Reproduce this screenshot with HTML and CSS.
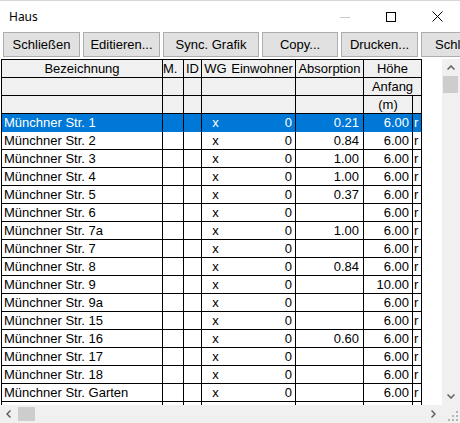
FILE: index.html
```html
<!DOCTYPE html>
<html lang="de">
<head>
<meta charset="utf-8">
<title>Haus</title>
<link rel="stylesheet" href="styles.css">
</head>
<body>
<div class="window">
  <div class="titlebar">
    <span class="title">Haus</span>
    <div class="controls">
      <div class="ctl"><svg width="10" height="10" viewBox="0 0 10 10"><line x1="0" y1="5.5" x2="10" y2="5.5" stroke="#c8c8c8" stroke-width="1"/></svg></div>
      <div class="ctl"><svg width="10" height="10" viewBox="0 0 10 10"><rect x="0.5" y="0.5" width="9" height="9" fill="none" stroke="#000" stroke-width="1"/></svg></div>
      <div class="ctl"><svg width="11" height="11" viewBox="0 0 11 11"><path d="M0.5 0.5 L10.5 10.5 M10.5 0.5 L0.5 10.5" stroke="#000" stroke-width="1"/></svg></div>
    </div>
  </div>
  <div class="toolbar">
    <button class="btn w77">Schließen</button>
    <button class="btn w77">Editieren...</button>
    <button class="btn w96">Sync. Grafik</button>
    <button class="btn w76">Copy...</button>
    <button class="btn w77">Drucken...</button>
    <button class="btn w86">Schließen</button>
  </div>
  <div class="main">
    <div class="grid">
      <div class="table">
        <div class="c h ctr">Bezeichnung</div>
        <div class="c h lft1">M.</div>
        <div class="c h lft2">ID</div>
        <div class="c h wg ctr">WG</div>
        <div class="c h ctr">Einwohner</div>
        <div class="c h ctr">Absorption</div>
        <div class="c h ctr span2">Höhe</div>

        <div class="c h"></div><div class="c h"></div><div class="c h"></div><div class="c h wg"></div><div class="c h"></div><div class="c h"></div>
        <div class="c h ctr span2">Anfang</div>

        <div class="c h"></div><div class="c h"></div><div class="c h"></div><div class="c h wg"></div><div class="c h"></div><div class="c h"></div>
        <div class="c h ctr">(m)</div><div class="c h"></div>

        <div class="c sel nm">Münchner Str. 1</div><div class="c sel"></div><div class="c sel"></div><div class="c sel wg ctr">x</div><div class="c sel num">0</div><div class="c sel num ab">0.21</div><div class="c sel num">6.00</div><div class="c sel r">r</div>

        <div class="c nm">Münchner Str. 2</div><div class="c"></div><div class="c"></div><div class="c wg ctr">x</div><div class="c num">0</div><div class="c num ab">0.84</div><div class="c num">6.00</div><div class="c r">r</div>

        <div class="c nm">Münchner Str. 3</div><div class="c"></div><div class="c"></div><div class="c wg ctr">x</div><div class="c num">0</div><div class="c num ab">1.00</div><div class="c num">6.00</div><div class="c r">r</div>

        <div class="c nm">Münchner Str. 4</div><div class="c"></div><div class="c"></div><div class="c wg ctr">x</div><div class="c num">0</div><div class="c num ab">1.00</div><div class="c num">6.00</div><div class="c r">r</div>

        <div class="c nm">Münchner Str. 5</div><div class="c"></div><div class="c"></div><div class="c wg ctr">x</div><div class="c num">0</div><div class="c num ab">0.37</div><div class="c num">6.00</div><div class="c r">r</div>

        <div class="c nm">Münchner Str. 6</div><div class="c"></div><div class="c"></div><div class="c wg ctr">x</div><div class="c num">0</div><div class="c num ab"></div><div class="c num">6.00</div><div class="c r">r</div>

        <div class="c nm">Münchner Str. 7a</div><div class="c"></div><div class="c"></div><div class="c wg ctr">x</div><div class="c num">0</div><div class="c num ab">1.00</div><div class="c num">6.00</div><div class="c r">r</div>

        <div class="c nm">Münchner Str. 7</div><div class="c"></div><div class="c"></div><div class="c wg ctr">x</div><div class="c num">0</div><div class="c num ab"></div><div class="c num">6.00</div><div class="c r">r</div>

        <div class="c nm">Münchner Str. 8</div><div class="c"></div><div class="c"></div><div class="c wg ctr">x</div><div class="c num">0</div><div class="c num ab">0.84</div><div class="c num">6.00</div><div class="c r">r</div>

        <div class="c nm">Münchner Str. 9</div><div class="c"></div><div class="c"></div><div class="c wg ctr">x</div><div class="c num">0</div><div class="c num ab"></div><div class="c num">10.00</div><div class="c r">r</div>

        <div class="c nm">Münchner Str. 9a</div><div class="c"></div><div class="c"></div><div class="c wg ctr">x</div><div class="c num">0</div><div class="c num ab"></div><div class="c num">6.00</div><div class="c r">r</div>

        <div class="c nm">Münchner Str. 15</div><div class="c"></div><div class="c"></div><div class="c wg ctr">x</div><div class="c num">0</div><div class="c num ab"></div><div class="c num">6.00</div><div class="c r">r</div>

        <div class="c nm">Münchner Str. 16</div><div class="c"></div><div class="c"></div><div class="c wg ctr">x</div><div class="c num">0</div><div class="c num ab">0.60</div><div class="c num">6.00</div><div class="c r">r</div>

        <div class="c nm">Münchner Str. 17</div><div class="c"></div><div class="c"></div><div class="c wg ctr">x</div><div class="c num">0</div><div class="c num ab"></div><div class="c num">6.00</div><div class="c r">r</div>

        <div class="c nm">Münchner Str. 18</div><div class="c"></div><div class="c"></div><div class="c wg ctr">x</div><div class="c num">0</div><div class="c num ab"></div><div class="c num">6.00</div><div class="c r">r</div>

        <div class="c nm">Münchner Str. Garten</div><div class="c"></div><div class="c"></div><div class="c wg ctr">x</div><div class="c num">0</div><div class="c num ab"></div><div class="c num">6.00</div><div class="c r">r</div>

        <div class="c nm">Sonnenbichl Garten</div><div class="c"></div><div class="c"></div><div class="c wg ctr">x</div><div class="c num">0</div><div class="c num ab"></div><div class="c num">6.00</div><div class="c r">r</div>
      </div>
    </div>
    <div class="vscroll">
      <div class="arrow"><svg width="8" height="5" viewBox="0 0 8 5"><polyline points="0.5,4.5 4,1 7.5,4.5" fill="none" stroke="#606060" stroke-width="1.5"/></svg></div>
      <div class="vthumb"></div>
      <div class="fill"></div>
      <div class="arrow"><svg width="8" height="5" viewBox="0 0 8 5"><polyline points="0.5,0.5 4,4 7.5,0.5" fill="none" stroke="#606060" stroke-width="1.5"/></svg></div>
    </div>
  </div>
  <div class="hscroll">
    <div class="harrow"><svg width="5" height="8" viewBox="0 0 5 8"><polyline points="4.5,0.5 1,4 4.5,7.5" fill="none" stroke="#606060" stroke-width="1.5"/></svg></div>
    <div class="hthumb"></div>
    <div class="fill"></div>
    <div class="harrow"><svg width="5" height="8" viewBox="0 0 5 8"><polyline points="0.5,0.5 4,4 0.5,7.5" fill="none" stroke="#606060" stroke-width="1.5"/></svg></div>
    <div class="corner"><svg width="12" height="12" viewBox="0 0 12 12" fill="#b4b4b4"><rect x="10" y="2" width="2" height="2"/><rect x="6" y="6" width="2" height="2"/><rect x="10" y="6" width="2" height="2"/><rect x="2" y="10" width="2" height="2"/><rect x="6" y="10" width="2" height="2"/><rect x="10" y="10" width="2" height="2"/></svg></div>
  </div>
</div>
</body>
</html>
```
FILE: styles.css
```css
html, body {
  margin: 0;
  padding: 0;
}
body {
  width: 460px;
  height: 423px;
  overflow: hidden;
  font-family: "Liberation Sans", Arial, sans-serif;
  font-size: 13px;
  color: #000;
  background: #f0f0f0;
}
.window {
  width: 460px;
  height: 423px;
  display: flex;
  flex-direction: column;
}
.titlebar {
  height: 32px;
  flex: none;
  background: #fff;
  display: flex;
  align-items: center;
  box-sizing: border-box;
  border-top: 1px solid #d6d6d6;
}
.title {
  font-family: "Noto Sans", "Open Sans", sans-serif;
  font-size: 12px;
  padding-left: 9px;
  flex: 1;
  margin-top: -1px;
}
.controls {
  display: flex;
  height: 31px;
}
.ctl {
  width: 46px;
  display: flex;
  align-items: center;
  justify-content: center;
}
.toolbar {
  height: 27px;
  flex: none;
  background: #fff;
  display: flex;
  align-items: flex-start;
  gap: 3px;
  padding-left: 3px;
  overflow: hidden;
  white-space: nowrap;
}
.btn {
  flex: none;
  height: 25px;
  margin: 0;
  padding: 0;
  border: 1px solid #adadad;
  background: #e1e1e1;
  font-family: "Liberation Sans", Arial, sans-serif;
  font-size: 13px;
  color: #000;
  box-sizing: border-box;
}
.w76 { width: 76px; }
.w77 { width: 77px; }
.w86 { width: 86px; }
.w96 { width: 96px; }
.main {
  height: 346px;
  flex: none;
  display: flex;
}
.grid {
  width: 442px;
  flex: none;
  background: #fff;
  overflow: hidden;
  padding-left: 1px;
  box-sizing: border-box;
}
.table {
  display: grid;
  grid-template-columns: 161px 21px 18px 27px 67px 68px 49px 9px;
  grid-auto-rows: 18px;
  border-left: 1px solid #000;
  border-top: 1px solid #000;
  width: max-content;
}
.c {
  box-sizing: border-box;
  border-right: 1px solid #000;
  border-bottom: 1px solid #000;
  line-height: 17px;
  white-space: nowrap;
  overflow: hidden;
  background: #fff;
}
.c.wg { border-right: none; }
.h { background: #f0f0f0; }
.ctr { text-align: center; }
.lft1 { padding-left: 0; }
.lft2 { padding-left: 2px; }
.span2 { grid-column: span 2; }
.nm { padding-left: 2px; }
.num { text-align: right; padding-right: 3px; }
.num.ab { padding-right: 4px; }
.r { padding-left: 1px; overflow: hidden; }
.sel {
  background: #0078d7;
  color: #fff;
  border-bottom-color: #0078d7;
}
.vscroll {
  flex: 1;
  display: flex;
  flex-direction: column;
  background: #f0f0f0;
}
.arrow {
  height: 17px;
  flex: none;
  display: flex;
  align-items: center;
  justify-content: center;
  padding-right: 1px;
}
.vthumb {
  height: 17px;
  flex: none;
  margin: 0 2px 0 1px;
  background: #cdcdcd;
}
.fill { flex: 1; }
.hscroll {
  height: 18px;
  flex: none;
  display: flex;
  background: #f0f0f0;
}
.harrow {
  width: 17px;
  flex: none;
  display: flex;
  align-items: center;
  justify-content: center;
}
.hthumb {
  width: 17px;
  flex: none;
  margin: 2px 0 2px 1px;
  background: #cdcdcd;
}
.corner {
  width: 18px;
  flex: none;
  display: flex;
  align-items: flex-end;
  justify-content: flex-end;
  padding: 0 2px 2px 0;
  box-sizing: border-box;
}
```
